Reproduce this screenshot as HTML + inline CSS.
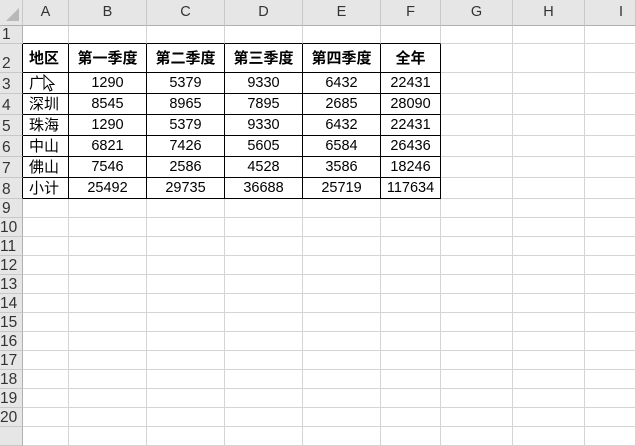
<!DOCTYPE html>
<html><head><meta charset="utf-8"><style>
*{margin:0;padding:0;box-sizing:border-box}
body{width:636px;height:431px;overflow:hidden;background:#fff;font-family:"Liberation Sans","Noto Sans CJK SC",sans-serif}
table{border-collapse:separate;border-spacing:0;table-layout:fixed;position:absolute;left:0;top:0}
td{border-right:1px solid #d4d4d4;border-bottom:1px solid #d4d4d4;font-size:14.5px;color:#000;text-align:center;white-space:nowrap;overflow:hidden;padding:0;line-height:1}
tr.h td{background:#e6e6e6;color:#333;border-right:1px solid #c8c8c8;border-bottom:1px solid #b0b0b0;font-size:14.5px;vertical-align:middle}
td.r{background:#e6e6e6;color:#333;border-right:1px solid #b0b0b0;border-bottom:1px solid #c8c8c8;text-align:left;padding-left:2px;font-size:15.5px;vertical-align:bottom;padding-bottom:1px}
tr.d td.c{border-right:1px solid #000;border-bottom:1px solid #000}
tr.b td.c{border-bottom:1px solid #000}
tr.d td.r{border-right:1px solid #000}
td.a{text-align:left;padding-left:6px;font-size:15px}
tr.hd td.c{font-weight:bold;font-size:15px}
</style></head><body>
<table>
<colgroup><col style="width:23px"><col style="width:46px"><col style="width:78px"><col style="width:78px"><col style="width:78px"><col style="width:78px"><col style="width:60px"><col style="width:72px"><col style="width:72px"><col style="width:51px"></colgroup>
<tr class="h" style="height:26px"><td style="position:relative"><svg width="22" height="24" style="position:absolute;left:0;top:0"><polygon points="19,8 19,21 6,21" fill="#b8b8b8"/></svg></td><td>A</td><td>B</td><td>C</td><td>D</td><td>E</td><td>F</td><td>G</td><td>H</td><td style="text-align:left;padding-left:34px">I</td></tr>
<tr class="b" style="height:18px"><td class="r">1</td><td class="c"></td><td class="c"></td><td class="c"></td><td class="c"></td><td class="c"></td><td class="c"></td><td></td><td></td><td></td></tr>
<tr class="d hd" style="height:29px"><td class="r">2</td><td class="c a" style="font-weight:bold">地区</td><td class="c">第一季度</td><td class="c">第二季度</td><td class="c">第三季度</td><td class="c">第四季度</td><td class="c">全年</td><td></td><td></td><td></td></tr>
<tr class="d" style="height:21px"><td class="r">3</td><td class="c a" style="position:relative">广<svg width="14" height="20" viewBox="0 0 14 20" style="position:absolute;left:20px;top:1px"><path d="M1 1 L1 15 L4.5 11.5 L7 17 L9 16 L6.5 10.5 L11 10.5 Z" fill="#fff" stroke="#000" stroke-width="1"/></svg></td><td class="c">1290</td><td class="c">5379</td><td class="c">9330</td><td class="c">6432</td><td class="c">22431</td><td></td><td></td><td></td></tr>
<tr class="d" style="height:21px"><td class="r">4</td><td class="c a">深圳</td><td class="c">8545</td><td class="c">8965</td><td class="c">7895</td><td class="c">2685</td><td class="c">28090</td><td></td><td></td><td></td></tr>
<tr class="d" style="height:21px"><td class="r">5</td><td class="c a">珠海</td><td class="c">1290</td><td class="c">5379</td><td class="c">9330</td><td class="c">6432</td><td class="c">22431</td><td></td><td></td><td></td></tr>
<tr class="d" style="height:21px"><td class="r">6</td><td class="c a">中山</td><td class="c">6821</td><td class="c">7426</td><td class="c">5605</td><td class="c">6584</td><td class="c">26436</td><td></td><td></td><td></td></tr>
<tr class="d" style="height:21px"><td class="r">7</td><td class="c a">佛山</td><td class="c">7546</td><td class="c">2586</td><td class="c">4528</td><td class="c">3586</td><td class="c">18246</td><td></td><td></td><td></td></tr>
<tr class="d" style="height:21px"><td class="r">8</td><td class="c a">小计</td><td class="c">25492</td><td class="c">29735</td><td class="c">36688</td><td class="c">25719</td><td class="c">117634</td><td></td><td></td><td></td></tr>
<tr style="height:19px"><td class="r">9</td><td></td><td></td><td></td><td></td><td></td><td></td><td></td><td></td><td></td></tr>
<tr style="height:19px"><td class="r" style="padding-left:0">10</td><td></td><td></td><td></td><td></td><td></td><td></td><td></td><td></td><td></td></tr>
<tr style="height:19px"><td class="r" style="padding-left:0">11</td><td></td><td></td><td></td><td></td><td></td><td></td><td></td><td></td><td></td></tr>
<tr style="height:19px"><td class="r" style="padding-left:0">12</td><td></td><td></td><td></td><td></td><td></td><td></td><td></td><td></td><td></td></tr>
<tr style="height:19px"><td class="r" style="padding-left:0">13</td><td></td><td></td><td></td><td></td><td></td><td></td><td></td><td></td><td></td></tr>
<tr style="height:19px"><td class="r" style="padding-left:0">14</td><td></td><td></td><td></td><td></td><td></td><td></td><td></td><td></td><td></td></tr>
<tr style="height:19px"><td class="r" style="padding-left:0">15</td><td></td><td></td><td></td><td></td><td></td><td></td><td></td><td></td><td></td></tr>
<tr style="height:19px"><td class="r" style="padding-left:0">16</td><td></td><td></td><td></td><td></td><td></td><td></td><td></td><td></td><td></td></tr>
<tr style="height:19px"><td class="r" style="padding-left:0">17</td><td></td><td></td><td></td><td></td><td></td><td></td><td></td><td></td><td></td></tr>
<tr style="height:19px"><td class="r" style="padding-left:0">18</td><td></td><td></td><td></td><td></td><td></td><td></td><td></td><td></td><td></td></tr>
<tr style="height:19px"><td class="r" style="padding-left:0">19</td><td></td><td></td><td></td><td></td><td></td><td></td><td></td><td></td><td></td></tr>
<tr style="height:19px"><td class="r" style="padding-left:0">20</td><td></td><td></td><td></td><td></td><td></td><td></td><td></td><td></td><td></td></tr>
<tr style="height:19px"><td class="r"></td><td></td><td></td><td></td><td></td><td></td><td></td><td></td><td></td><td></td></tr>
</table>
</body></html>
